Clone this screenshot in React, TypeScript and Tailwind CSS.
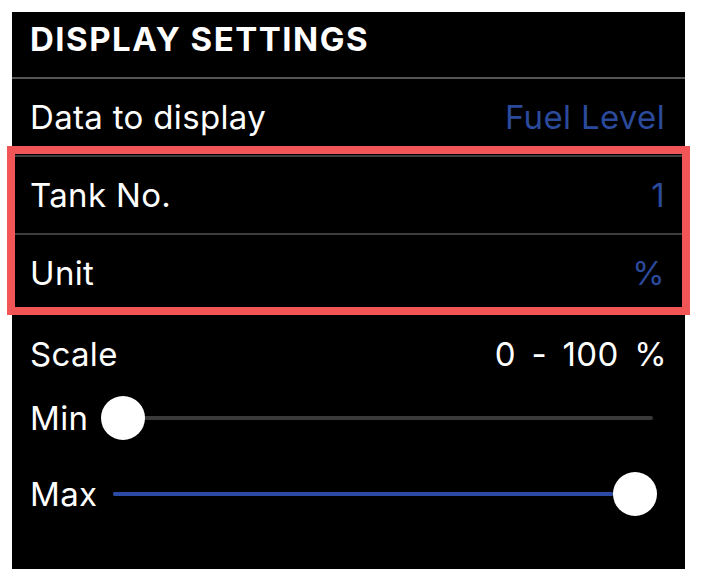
import React from 'react'

const font = { fontFamily: 'Inter, "Liberation Sans", sans-serif' }

function Row({ label, value }: { label: string; value: string }) {
  return (
    <div className="flex h-[78px] items-center justify-between border-b-2 border-[#3d3d3d] pl-[18px] pr-[20px]">
      <span className="text-[33px] leading-none tracking-[0.01em] text-white">{label}</span>
      <span className="text-[33px] leading-none tracking-[0.01em] text-[#2b4a9c]">{value}</span>
    </div>
  )
}

function Slider({ label, value }: { label: string; value: number }) {
  return (
    <div className="flex h-[46px] items-center pl-[18px]">
      <span className="w-[71px] shrink-0 text-[33px] leading-none tracking-[0.01em] text-white">{label}</span>
      <div className="relative h-[46px] w-[556px]">
        {/* track */}
        <div className="absolute left-[12px] right-[4px] top-[21px] h-[4px] rounded-full bg-[#3a3a3a]" />
        <div
          className="absolute left-[12px] top-[21px] h-[4px] rounded-full bg-[#2a4aa6]"
          style={{ width: `${(512 - 12) * value / 100}px` }}
        />
        {/* knob */}
        <div
          className="absolute top-[1px] h-[44px] w-[44px] rounded-full bg-white"
          style={{ left: `${512 * value / 100}px` }}
        />
      </div>
    </div>
  )
}

export default function App() {
  return (
    <div className="min-h-screen bg-white pl-[12px] pt-[12px]" style={font}>
      <div className="relative flex h-[557px] w-[673px] flex-col bg-black">
        {/* Header */}
        <div className="flex h-[67px] items-center border-b-2 border-[#555555] pb-[10px] pl-[18px]">
          <h1 className="text-[33px] font-bold leading-none tracking-[0.045em] text-white">DISPLAY SETTINGS</h1>
        </div>

        <Row label="Data to display" value="Fuel Level" />
        <Row label="Tank No." value="1" />
        <Row label="Unit" value="%" />

        {/* Scale */}
        <div className="flex h-[82px] items-center justify-between pl-[18px] pr-[18px]">
          <span className="text-[33px] leading-none tracking-[0.01em] text-white">Scale</span>
          <span className="text-[33px] leading-none tracking-[0.01em] text-white [word-spacing:6px]">0 - 100 %</span>
        </div>

        <Slider label="Min" value={0} />
        <div className="mt-[30px]">
          <Slider label="Max" value={100} />
        </div>

        {/* highlight box */}
        <div className="absolute left-[-5px] top-[134px] h-[169px] w-[683px] border-[8px] border-[#f25555]" />
      </div>
    </div>
  )
}
